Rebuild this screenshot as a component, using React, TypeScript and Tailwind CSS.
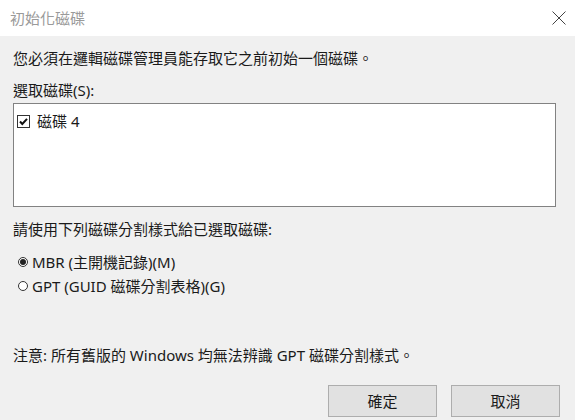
import React from "react";

const FONT = "font-['Noto_Sans','Noto_Sans_CJK_TC',sans-serif]";

function Checkbox() {
  return (
    <span className="flex h-[13px] w-[13px] items-center justify-center border border-[#333] bg-white">
      <svg viewBox="0 0 11 11" width="11" height="11" aria-hidden>
        <path d="M2 5.5 L4.3 8 L9 2.8" fill="none" stroke="#111" strokeWidth="2" />
      </svg>
    </span>
  );
}

function Radio({ checked }: { checked?: boolean }) {
  return (
    <span className="flex h-[10px] w-[10px] items-center justify-center rounded-full border border-[#333] bg-white">
      {checked && <span className="h-[6px] w-[6px] rounded-full bg-[#222]" />}
    </span>
  );
}

export default function App() {
  return (
    <div className={`h-[420px] w-[575px] overflow-hidden bg-[#f0f0f0] text-[#1a1a1a] ${FONT}`}>
      {/* title bar */}
      <div className="flex h-9 items-center justify-between bg-white pl-[10px] pr-[8px]">
        <span className="text-[15px] text-[#9a9a9a]">初始化磁碟</span>
        <svg viewBox="0 0 14 14" width="14" height="14" className="mr-[1px]" aria-hidden>
          <path d="M0.5 0.5 L13.5 13.5 M13.5 0.5 L0.5 13.5" stroke="#444" strokeWidth="1" />
        </svg>
      </div>

      <div className="pl-[13px] pr-[19px] pt-3 text-[15px] leading-5">
        <p>您必須在邏輯磁碟管理員能存取它之前初始一個磁碟。</p>
        <p className="mt-3">選取磁碟(S):</p>
        <div className="mt-[3px] h-[104px] border border-[#828282] bg-white pl-[3px] pt-[7px]">
          <div className="flex items-center gap-[7px]">
            <Checkbox />
            <span>磁碟 4</span>
          </div>
        </div>

        <p className="mt-3">請使用下列磁碟分割樣式給已選取磁碟:</p>
        <div className="mt-[13px] flex items-center gap-[4px] pl-[5px]">
          <Radio checked />
          <span>MBR (主開機記錄)(M)</span>
        </div>
        <div className="mt-1 flex items-center gap-[4px] pl-[5px]">
          <Radio />
          <span>GPT (GUID 磁碟分割表格)(G)</span>
        </div>

        <p className="mt-[49px]">注意: 所有舊版的 Windows 均無法辨識 GPT 磁碟分割樣式。</p>
      </div>

      <div className="mt-5 flex justify-end gap-[14px] pr-[15px]">
        <button className="h-8 w-[109px] border border-[#adadad] bg-[#e1e1e1] text-[15px]">確定</button>
        <button className="h-8 w-[109px] border border-[#adadad] bg-[#e1e1e1] text-[15px]">取消</button>
      </div>
    </div>
  );
}
